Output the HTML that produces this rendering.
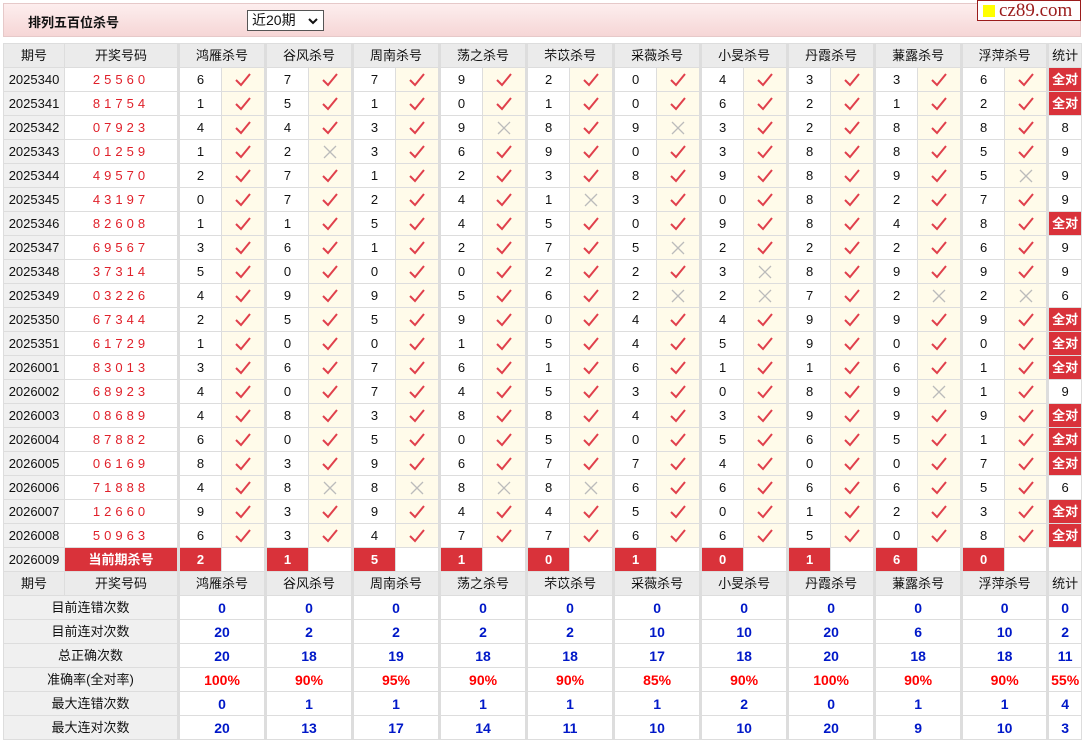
<!DOCTYPE html>
<html><head><meta charset="utf-8"><style>
body{margin:0;background:#fff;font-family:"Liberation Sans","Noto Sans CJK SC",sans-serif;font-size:13px;color:#111;width:1083px;height:741px;overflow:hidden;position:relative}
.bar{position:absolute;left:3px;top:3px;width:1076px;height:32px;background:linear-gradient(#fdeeee,#f6d6d6);border:1px solid #e6c9c9}
.ttl{position:absolute;left:24px;top:8px;font-weight:bold;font-size:13px}
.sel{position:absolute;left:243px;top:6px;border:1px solid #555;background:#fff;font-size:14px;line-height:19px;padding-left:4px;box-sizing:border-box;width:77px;height:21px}
.sel svg{position:absolute;right:5px;top:7px}
.logo{position:absolute;left:977px;top:0;width:104px;height:21px;box-sizing:border-box;background:#fff;border:1px solid #9b1c1c;font-family:"Liberation Serif",serif;font-size:19px;color:#9b1c1c;line-height:19px;white-space:nowrap;overflow:hidden}
.logo i{display:inline-block;width:12px;height:12px;background:#ff0;margin:0 4px 0 5px;vertical-align:-1px}
table{position:absolute;left:3px;top:43px;border-collapse:collapse;table-layout:fixed;width:1078px}
tr{height:24px}
td{height:23px;line-height:16px;border:1px solid #ddd;text-align:center;padding:0;white-space:nowrap;overflow:hidden}
.h td{background:#ebebeb}
.q{background:#f0f0f0}
.c{color:#e0202a;letter-spacing:4px;font-size:13px}
.n{border-left:3px solid #ddd}
.k{background:#fffbea}
.s{border-left:3px solid #ddd}
.r{background:#d9323a;color:#fff;font-weight:bold}
.b{color:#0018c8;font-weight:bold;font-size:14px}
.p{color:#f00;font-weight:bold;font-size:14px}
svg{display:block;margin:auto}
.y path{fill:none;stroke:#e0404c;stroke-width:2}
.x path{fill:none;stroke:#bbb;stroke-width:1.3}
</style></head><body>
<div class="bar"><div class="ttl">排列五百位杀号</div><div class="sel">近20期<svg width="10" height="7"><path d="M1 1l4 4 4-4" fill="none" stroke="#111" stroke-width="2"/></svg></div></div>
<div class="logo"><i></i>cz89.com</div>
<script>
var Y='<svg class="y" width="20" height="16"><path d="M3 8l5 5L17 2"/></svg>',X='<svg class="x" width="14" height="14"><path d="M1 1l12 12M13 1L1 13"/></svg>';
</script>
<table>
<colgroup><col style="width:61px"><col style="width:114px">
<col style="width:43px"><col style="width:44px"><col style="width:43px"><col style="width:44px"><col style="width:43px"><col style="width:44px"><col style="width:43px"><col style="width:44px"><col style="width:43px"><col style="width:44px"><col style="width:43px"><col style="width:44px"><col style="width:43px"><col style="width:44px"><col style="width:43px"><col style="width:44px"><col style="width:43px"><col style="width:44px"><col style="width:43px"><col style="width:43px"><col style="width:34px"></colgroup>
<tr class="h"><td>期号</td><td>开奖号码</td><td colspan="2" class="n">鸿雁杀号</td><td colspan="2" class="n">谷风杀号</td><td colspan="2" class="n">周南杀号</td><td colspan="2" class="n">荡之杀号</td><td colspan="2" class="n">芣苡杀号</td><td colspan="2" class="n">采薇杀号</td><td colspan="2" class="n">小旻杀号</td><td colspan="2" class="n">丹霞杀号</td><td colspan="2" class="n">蒹露杀号</td><td colspan="2" class="n">浮萍杀号</td><td class="s">统计</td></tr>
<tr><td class="q">2025340</td><td class="c">25560</td><td class="n">6</td><td class="k">✓</td><td class="n">7</td><td class="k">✓</td><td class="n">7</td><td class="k">✓</td><td class="n">9</td><td class="k">✓</td><td class="n">2</td><td class="k">✓</td><td class="n">0</td><td class="k">✓</td><td class="n">4</td><td class="k">✓</td><td class="n">3</td><td class="k">✓</td><td class="n">3</td><td class="k">✓</td><td class="n">6</td><td class="k">✓</td><td class="s r">全对</td></tr>
<tr><td class="q">2025341</td><td class="c">81754</td><td class="n">1</td><td class="k">✓</td><td class="n">5</td><td class="k">✓</td><td class="n">1</td><td class="k">✓</td><td class="n">0</td><td class="k">✓</td><td class="n">1</td><td class="k">✓</td><td class="n">0</td><td class="k">✓</td><td class="n">6</td><td class="k">✓</td><td class="n">2</td><td class="k">✓</td><td class="n">1</td><td class="k">✓</td><td class="n">2</td><td class="k">✓</td><td class="s r">全对</td></tr>
<tr><td class="q">2025342</td><td class="c">07923</td><td class="n">4</td><td class="k">✓</td><td class="n">4</td><td class="k">✓</td><td class="n">3</td><td class="k">✓</td><td class="n">9</td><td class="k">✗</td><td class="n">8</td><td class="k">✓</td><td class="n">9</td><td class="k">✗</td><td class="n">3</td><td class="k">✓</td><td class="n">2</td><td class="k">✓</td><td class="n">8</td><td class="k">✓</td><td class="n">8</td><td class="k">✓</td><td class="s">8</td></tr>
<tr><td class="q">2025343</td><td class="c">01259</td><td class="n">1</td><td class="k">✓</td><td class="n">2</td><td class="k">✗</td><td class="n">3</td><td class="k">✓</td><td class="n">6</td><td class="k">✓</td><td class="n">9</td><td class="k">✓</td><td class="n">0</td><td class="k">✓</td><td class="n">3</td><td class="k">✓</td><td class="n">8</td><td class="k">✓</td><td class="n">8</td><td class="k">✓</td><td class="n">5</td><td class="k">✓</td><td class="s">9</td></tr>
<tr><td class="q">2025344</td><td class="c">49570</td><td class="n">2</td><td class="k">✓</td><td class="n">7</td><td class="k">✓</td><td class="n">1</td><td class="k">✓</td><td class="n">2</td><td class="k">✓</td><td class="n">3</td><td class="k">✓</td><td class="n">8</td><td class="k">✓</td><td class="n">9</td><td class="k">✓</td><td class="n">8</td><td class="k">✓</td><td class="n">9</td><td class="k">✓</td><td class="n">5</td><td class="k">✗</td><td class="s">9</td></tr>
<tr><td class="q">2025345</td><td class="c">43197</td><td class="n">0</td><td class="k">✓</td><td class="n">7</td><td class="k">✓</td><td class="n">2</td><td class="k">✓</td><td class="n">4</td><td class="k">✓</td><td class="n">1</td><td class="k">✗</td><td class="n">3</td><td class="k">✓</td><td class="n">0</td><td class="k">✓</td><td class="n">8</td><td class="k">✓</td><td class="n">2</td><td class="k">✓</td><td class="n">7</td><td class="k">✓</td><td class="s">9</td></tr>
<tr><td class="q">2025346</td><td class="c">82608</td><td class="n">1</td><td class="k">✓</td><td class="n">1</td><td class="k">✓</td><td class="n">5</td><td class="k">✓</td><td class="n">4</td><td class="k">✓</td><td class="n">5</td><td class="k">✓</td><td class="n">0</td><td class="k">✓</td><td class="n">9</td><td class="k">✓</td><td class="n">8</td><td class="k">✓</td><td class="n">4</td><td class="k">✓</td><td class="n">8</td><td class="k">✓</td><td class="s r">全对</td></tr>
<tr><td class="q">2025347</td><td class="c">69567</td><td class="n">3</td><td class="k">✓</td><td class="n">6</td><td class="k">✓</td><td class="n">1</td><td class="k">✓</td><td class="n">2</td><td class="k">✓</td><td class="n">7</td><td class="k">✓</td><td class="n">5</td><td class="k">✗</td><td class="n">2</td><td class="k">✓</td><td class="n">2</td><td class="k">✓</td><td class="n">2</td><td class="k">✓</td><td class="n">6</td><td class="k">✓</td><td class="s">9</td></tr>
<tr><td class="q">2025348</td><td class="c">37314</td><td class="n">5</td><td class="k">✓</td><td class="n">0</td><td class="k">✓</td><td class="n">0</td><td class="k">✓</td><td class="n">0</td><td class="k">✓</td><td class="n">2</td><td class="k">✓</td><td class="n">2</td><td class="k">✓</td><td class="n">3</td><td class="k">✗</td><td class="n">8</td><td class="k">✓</td><td class="n">9</td><td class="k">✓</td><td class="n">9</td><td class="k">✓</td><td class="s">9</td></tr>
<tr><td class="q">2025349</td><td class="c">03226</td><td class="n">4</td><td class="k">✓</td><td class="n">9</td><td class="k">✓</td><td class="n">9</td><td class="k">✓</td><td class="n">5</td><td class="k">✓</td><td class="n">6</td><td class="k">✓</td><td class="n">2</td><td class="k">✗</td><td class="n">2</td><td class="k">✗</td><td class="n">7</td><td class="k">✓</td><td class="n">2</td><td class="k">✗</td><td class="n">2</td><td class="k">✗</td><td class="s">6</td></tr>
<tr><td class="q">2025350</td><td class="c">67344</td><td class="n">2</td><td class="k">✓</td><td class="n">5</td><td class="k">✓</td><td class="n">5</td><td class="k">✓</td><td class="n">9</td><td class="k">✓</td><td class="n">0</td><td class="k">✓</td><td class="n">4</td><td class="k">✓</td><td class="n">4</td><td class="k">✓</td><td class="n">9</td><td class="k">✓</td><td class="n">9</td><td class="k">✓</td><td class="n">9</td><td class="k">✓</td><td class="s r">全对</td></tr>
<tr><td class="q">2025351</td><td class="c">61729</td><td class="n">1</td><td class="k">✓</td><td class="n">0</td><td class="k">✓</td><td class="n">0</td><td class="k">✓</td><td class="n">1</td><td class="k">✓</td><td class="n">5</td><td class="k">✓</td><td class="n">4</td><td class="k">✓</td><td class="n">5</td><td class="k">✓</td><td class="n">9</td><td class="k">✓</td><td class="n">0</td><td class="k">✓</td><td class="n">0</td><td class="k">✓</td><td class="s r">全对</td></tr>
<tr><td class="q">2026001</td><td class="c">83013</td><td class="n">3</td><td class="k">✓</td><td class="n">6</td><td class="k">✓</td><td class="n">7</td><td class="k">✓</td><td class="n">6</td><td class="k">✓</td><td class="n">1</td><td class="k">✓</td><td class="n">6</td><td class="k">✓</td><td class="n">1</td><td class="k">✓</td><td class="n">1</td><td class="k">✓</td><td class="n">6</td><td class="k">✓</td><td class="n">1</td><td class="k">✓</td><td class="s r">全对</td></tr>
<tr><td class="q">2026002</td><td class="c">68923</td><td class="n">4</td><td class="k">✓</td><td class="n">0</td><td class="k">✓</td><td class="n">7</td><td class="k">✓</td><td class="n">4</td><td class="k">✓</td><td class="n">5</td><td class="k">✓</td><td class="n">3</td><td class="k">✓</td><td class="n">0</td><td class="k">✓</td><td class="n">8</td><td class="k">✓</td><td class="n">9</td><td class="k">✗</td><td class="n">1</td><td class="k">✓</td><td class="s">9</td></tr>
<tr><td class="q">2026003</td><td class="c">08689</td><td class="n">4</td><td class="k">✓</td><td class="n">8</td><td class="k">✓</td><td class="n">3</td><td class="k">✓</td><td class="n">8</td><td class="k">✓</td><td class="n">8</td><td class="k">✓</td><td class="n">4</td><td class="k">✓</td><td class="n">3</td><td class="k">✓</td><td class="n">9</td><td class="k">✓</td><td class="n">9</td><td class="k">✓</td><td class="n">9</td><td class="k">✓</td><td class="s r">全对</td></tr>
<tr><td class="q">2026004</td><td class="c">87882</td><td class="n">6</td><td class="k">✓</td><td class="n">0</td><td class="k">✓</td><td class="n">5</td><td class="k">✓</td><td class="n">0</td><td class="k">✓</td><td class="n">5</td><td class="k">✓</td><td class="n">0</td><td class="k">✓</td><td class="n">5</td><td class="k">✓</td><td class="n">6</td><td class="k">✓</td><td class="n">5</td><td class="k">✓</td><td class="n">1</td><td class="k">✓</td><td class="s r">全对</td></tr>
<tr><td class="q">2026005</td><td class="c">06169</td><td class="n">8</td><td class="k">✓</td><td class="n">3</td><td class="k">✓</td><td class="n">9</td><td class="k">✓</td><td class="n">6</td><td class="k">✓</td><td class="n">7</td><td class="k">✓</td><td class="n">7</td><td class="k">✓</td><td class="n">4</td><td class="k">✓</td><td class="n">0</td><td class="k">✓</td><td class="n">0</td><td class="k">✓</td><td class="n">7</td><td class="k">✓</td><td class="s r">全对</td></tr>
<tr><td class="q">2026006</td><td class="c">71888</td><td class="n">4</td><td class="k">✓</td><td class="n">8</td><td class="k">✗</td><td class="n">8</td><td class="k">✗</td><td class="n">8</td><td class="k">✗</td><td class="n">8</td><td class="k">✗</td><td class="n">6</td><td class="k">✓</td><td class="n">6</td><td class="k">✓</td><td class="n">6</td><td class="k">✓</td><td class="n">6</td><td class="k">✓</td><td class="n">5</td><td class="k">✓</td><td class="s">6</td></tr>
<tr><td class="q">2026007</td><td class="c">12660</td><td class="n">9</td><td class="k">✓</td><td class="n">3</td><td class="k">✓</td><td class="n">9</td><td class="k">✓</td><td class="n">4</td><td class="k">✓</td><td class="n">4</td><td class="k">✓</td><td class="n">5</td><td class="k">✓</td><td class="n">0</td><td class="k">✓</td><td class="n">1</td><td class="k">✓</td><td class="n">2</td><td class="k">✓</td><td class="n">3</td><td class="k">✓</td><td class="s r">全对</td></tr>
<tr><td class="q">2026008</td><td class="c">50963</td><td class="n">6</td><td class="k">✓</td><td class="n">3</td><td class="k">✓</td><td class="n">4</td><td class="k">✓</td><td class="n">7</td><td class="k">✓</td><td class="n">7</td><td class="k">✓</td><td class="n">6</td><td class="k">✓</td><td class="n">6</td><td class="k">✓</td><td class="n">5</td><td class="k">✓</td><td class="n">0</td><td class="k">✓</td><td class="n">8</td><td class="k">✓</td><td class="s r">全对</td></tr>
<tr><td class="q">2026009</td><td class="r">当前期杀号</td><td class="n r">2</td><td></td><td class="n r">1</td><td></td><td class="n r">5</td><td></td><td class="n r">1</td><td></td><td class="n r">0</td><td></td><td class="n r">1</td><td></td><td class="n r">0</td><td></td><td class="n r">1</td><td></td><td class="n r">6</td><td></td><td class="n r">0</td><td></td><td class="s"></td></tr>
<tr class="h"><td>期号</td><td>开奖号码</td><td colspan="2" class="n">鸿雁杀号</td><td colspan="2" class="n">谷风杀号</td><td colspan="2" class="n">周南杀号</td><td colspan="2" class="n">荡之杀号</td><td colspan="2" class="n">芣苡杀号</td><td colspan="2" class="n">采薇杀号</td><td colspan="2" class="n">小旻杀号</td><td colspan="2" class="n">丹霞杀号</td><td colspan="2" class="n">蒹露杀号</td><td colspan="2" class="n">浮萍杀号</td><td class="s">统计</td></tr>
<tr><td colspan="2" class="q">目前连错次数</td><td colspan="2" class="n b">0</td><td colspan="2" class="n b">0</td><td colspan="2" class="n b">0</td><td colspan="2" class="n b">0</td><td colspan="2" class="n b">0</td><td colspan="2" class="n b">0</td><td colspan="2" class="n b">0</td><td colspan="2" class="n b">0</td><td colspan="2" class="n b">0</td><td colspan="2" class="n b">0</td><td class="s b">0</td></tr>
<tr><td colspan="2" class="q">目前连对次数</td><td colspan="2" class="n b">20</td><td colspan="2" class="n b">2</td><td colspan="2" class="n b">2</td><td colspan="2" class="n b">2</td><td colspan="2" class="n b">2</td><td colspan="2" class="n b">10</td><td colspan="2" class="n b">10</td><td colspan="2" class="n b">20</td><td colspan="2" class="n b">6</td><td colspan="2" class="n b">10</td><td class="s b">2</td></tr>
<tr><td colspan="2" class="q">总正确次数</td><td colspan="2" class="n b">20</td><td colspan="2" class="n b">18</td><td colspan="2" class="n b">19</td><td colspan="2" class="n b">18</td><td colspan="2" class="n b">18</td><td colspan="2" class="n b">17</td><td colspan="2" class="n b">18</td><td colspan="2" class="n b">20</td><td colspan="2" class="n b">18</td><td colspan="2" class="n b">18</td><td class="s b">11</td></tr>
<tr><td colspan="2" class="q">准确率(全对率)</td><td colspan="2" class="n p">100%</td><td colspan="2" class="n p">90%</td><td colspan="2" class="n p">95%</td><td colspan="2" class="n p">90%</td><td colspan="2" class="n p">90%</td><td colspan="2" class="n p">85%</td><td colspan="2" class="n p">90%</td><td colspan="2" class="n p">100%</td><td colspan="2" class="n p">90%</td><td colspan="2" class="n p">90%</td><td class="s p">55%</td></tr>
<tr><td colspan="2" class="q">最大连错次数</td><td colspan="2" class="n b">0</td><td colspan="2" class="n b">1</td><td colspan="2" class="n b">1</td><td colspan="2" class="n b">1</td><td colspan="2" class="n b">1</td><td colspan="2" class="n b">1</td><td colspan="2" class="n b">2</td><td colspan="2" class="n b">0</td><td colspan="2" class="n b">1</td><td colspan="2" class="n b">1</td><td class="s b">4</td></tr>
<tr><td colspan="2" class="q">最大连对次数</td><td colspan="2" class="n b">20</td><td colspan="2" class="n b">13</td><td colspan="2" class="n b">17</td><td colspan="2" class="n b">14</td><td colspan="2" class="n b">11</td><td colspan="2" class="n b">10</td><td colspan="2" class="n b">10</td><td colspan="2" class="n b">20</td><td colspan="2" class="n b">9</td><td colspan="2" class="n b">10</td><td class="s b">3</td></tr>
</table>
<script>
document.querySelectorAll('td.k').forEach(function(t){t.innerHTML=t.textContent=='✓'?Y:X;});
</script>
</body></html>
